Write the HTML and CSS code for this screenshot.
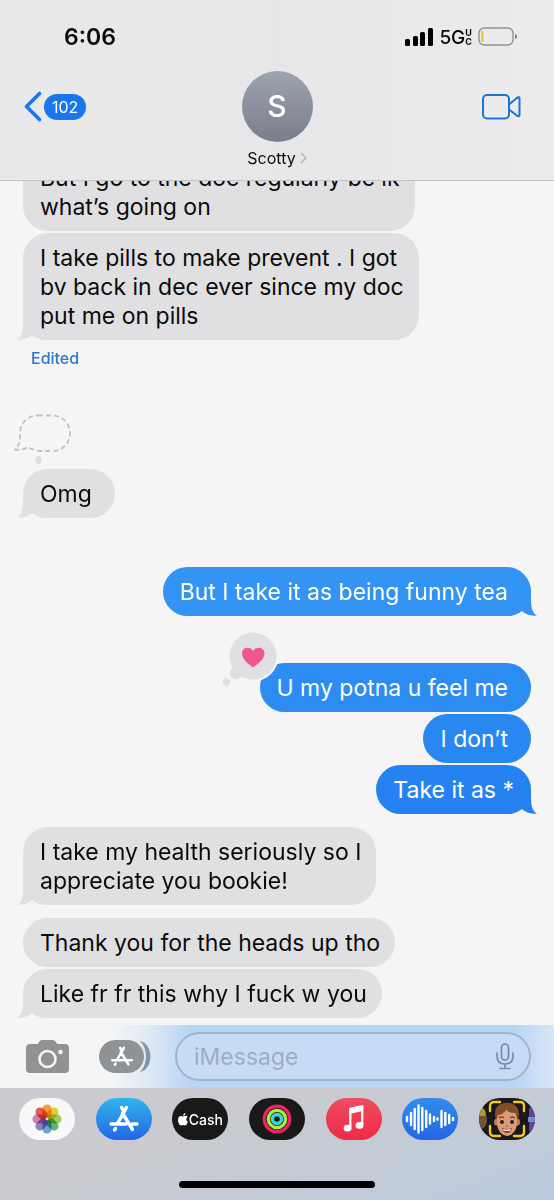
FILE: index.html
```html
<!DOCTYPE html>
<html lang="en">
<head>
    <meta charset="UTF-8">
    <meta name="viewport" content="width=device-width, initial-scale=1.0">
    <title>Messages - Scotty</title>
    <link rel="stylesheet" href="styles.css">
</head>
<body>
    <!-- shared shapes -->
    <svg class="defs" aria-hidden="true">
        <symbol id="tail" viewBox="0 0 30 25">
            <path d="M6 0V8C6 16 5 22 0 24.500C6 25.500 12 23 15 20C20 24 25 25 30 25V0Z"/>
        </symbol>
        <symbol id="appstore" viewBox="0 0 30 28">
            <g fill="none" stroke="#fff" stroke-width="3.400" stroke-linecap="round">
                <path d="M12.500 2.500L14.500 6M17.500 2.500L8.500 18.500M13.500 8L23.500 24.500M2 19H17M23 19H28M6.500 23.500L5.500 25"/>
            </g>
        </symbol>
    </svg>

    <header>
        <div class="status">
            <span class="time">6:06</span>
            <div class="status-right">
                <svg width="28" height="18" viewBox="0 0 28 18">
                    <rect x="0" y="11" width="5" height="7" rx="1.500"/>
                    <rect x="8" y="8" width="5" height="10" rx="1.500"/>
                    <rect x="15" y="4" width="5" height="14" rx="1.500"/>
                    <rect x="23" y="0" width="5" height="18" rx="1.500"/>
                </svg>
                <span class="network">5G<span class="uc"><span>U</span><span>C</span></span></span>
                <svg width="40" height="20" viewBox="0 0 40 20">
                    <rect x="1" y="1" width="34" height="17" rx="5" fill="none" stroke="#929295" stroke-width="1.400"/>
                    <rect x="3" y="4" width="2.500" height="11" rx="1" fill="#f5c443"/>
                    <path d="M37 7Q39 7.500 39 9.500Q39 11.500 37 12Z" fill="#77777a"/>
                </svg>
            </div>
        </div>
        <div class="topbar">
            <a href="#" class="back">
                <svg width="18" height="31" viewBox="0 0 18 31"><path d="M15.500 2.500L2.500 15.500L15.500 28.500" fill="none" stroke="#1976ef" stroke-width="3.600" stroke-linecap="round" stroke-linejoin="round"/></svg>
                <span class="count">102</span>
            </a>
            <a href="#" class="contact">
                <span class="avatar">S</span>
                <span class="name">Scotty
                    <svg width="7" height="12" viewBox="0 0 7 12"><path d="M1 1L6 6L1 11" fill="none" stroke="#b5b5b8" stroke-width="1.500"/></svg>
                </span>
            </a>
            <button type="button" class="video" aria-label="FaceTime">
                <svg width="39" height="26" viewBox="0 0 39 26" fill="none" stroke="#1c74d8" stroke-width="2" stroke-linejoin="round">
                    <rect x="1" y="1" width="26" height="23.500" rx="4"/>
                    <path d="M27 10.500L35.500 3.500Q37.500 2.500 37.500 4.500V21Q37.500 23 35.500 22L27 15.500"/>
                </svg>
            </button>
        </div>
    </header>

    <main>
        <div class="bubble in">But I go to the doc regularly bc ik<br>what’s going on</div>
        <div class="bubble in">I take pills to make prevent . I got<br>bv back in dec ever since my doc<br>put me on pills
            <svg class="tail"><use href="#tail"/></svg>
        </div>
        <a href="#" class="edited">Edited</a>

        <svg class="empty" width="58" height="50" viewBox="0 0 58 50">
            <path d="M24 1.500H38C49 1.500 56 10 56 19C56 29 49 37 38 37H26C21 36.500 17 35 14 33Q8 37 1 35.500C5 32 6 28 6 22V19C6 9 14 1.500 24 1.500Z" fill="none" stroke="#c3c3c5" stroke-width="1.800" stroke-dasharray="5 3"/>
            <ellipse cx="24.500" cy="46" rx="3" ry="4" fill="#dddddf"/>
        </svg>
        <div class="bubble in short">Omg
            <svg class="tail"><use href="#tail"/></svg>
        </div>

        <div class="bubble out shade-1 turn">But I take it as being funny tea
            <svg class="tail"><use href="#tail"/></svg>
        </div>
        <div class="bubble out shade-2 far">U my potna u feel me
            <svg class="reaction" width="58" height="58" viewBox="0 0 58 58">
                <circle cx="32" cy="25" r="25.500" fill="#f5f5f5"/>
                <circle cx="32" cy="25" r="23.500" fill="#e0e0e2"/>
                <circle cx="15" cy="42" r="6.500" fill="#e0e0e2"/>
                <circle cx="5.500" cy="51" r="3.700" fill="#e0e0e2"/>
                <path d="M32 36.500C27 33 21 28 21 22.500C21 16 29 15 32 20C35 15 43.500 16 43.500 22.500C43.500 28 37 33 32 36.500Z" fill="#ee5890"/>
            </svg>
        </div>
        <div class="bubble out shade-3">I don’t</div>
        <div class="bubble out shade-4">Take it as *
            <svg class="tail"><use href="#tail"/></svg>
        </div>

        <div class="bubble in near">I take my health seriously so I<br>appreciate you bookie!
            <svg class="tail"><use href="#tail"/></svg>
        </div>
        <div class="bubble in near">Thank you for the heads up tho</div>
        <div class="bubble in">Like fr fr this why I fuck w you
            <svg class="tail"><use href="#tail"/></svg>
        </div>
    </main>

    <form class="compose">
        <button type="button" aria-label="Camera">
            <svg width="43" height="34" viewBox="0 0 43 34">
                <path d="M4 4H11C13 4 13 0 16 0H27C30 0 30 4 32 4H39Q43 4 43 8V29Q43 33 39 33H4Q0 33 0 29V8Q0 4 4 4Z" fill="#929292"/>
                <circle cx="21.500" cy="19" r="8" fill="none" stroke="#f5f5f5" stroke-width="2.600"/>
                <circle cx="34.500" cy="12" r="2.300" fill="#f5f5f5"/>
            </svg>
        </button>
        <button type="button" aria-label="Apps">
            <svg width="52" height="34" viewBox="0 0 52 34">
                <rect width="45" height="33" rx="16.500" fill="#909396"/>
                <path d="M41 1C55 4 55 29 41 32C49 24 49 9 41 1Z" fill="#8195ab"/>
                <use href="#appstore" x="11" y="6" width="24" height="21"/>
            </svg>
        </button>
        <div class="field">
            <input type="text" placeholder="iMessage" aria-label="iMessage">
            <button type="button" aria-label="Dictate">
                <svg width="18" height="27" viewBox="0 0 18 27" fill="none" stroke="#728ba9" stroke-width="1.700" stroke-linecap="round">
                    <rect x="5.500" y="1" width="7" height="16" rx="3.500"/>
                    <path d="M1 10V13C1 18 4 21 9 21C14 21 17 18 17 13V10M9 21V25.500M4 25.500H14"/>
                </svg>
            </button>
        </div>
    </form>

    <footer>
        <nav class="apps">
            <button type="button" class="app photos" aria-label="Photos">
                <svg width="30" height="30" viewBox="-15 -15 30 30">
                    <g class="petals">
                        <rect x="-4.500" y="-14.500" width="9" height="13.500" rx="4.500" fill="#f69722"/>
                        <rect x="-4.500" y="-14.500" width="9" height="13.500" rx="4.500" fill="#e9cf22" transform="rotate(45)"/>
                        <rect x="-4.500" y="-14.500" width="9" height="13.500" rx="4.500" fill="#a1cc4a" transform="rotate(90)"/>
                        <rect x="-4.500" y="-14.500" width="9" height="13.500" rx="4.500" fill="#55ae74" transform="rotate(135)"/>
                        <rect x="-4.500" y="-14.500" width="9" height="13.500" rx="4.500" fill="#609fd4" transform="rotate(180)"/>
                        <rect x="-4.500" y="-14.500" width="9" height="13.500" rx="4.500" fill="#8a77b9" transform="rotate(225)"/>
                        <rect x="-4.500" y="-14.500" width="9" height="13.500" rx="4.500" fill="#cc79ad" transform="rotate(270)"/>
                        <rect x="-4.500" y="-14.500" width="9" height="13.500" rx="4.500" fill="#e94e3e" transform="rotate(315)"/>
                    </g>
                </svg>
            </button>
            <button type="button" class="app store" aria-label="App Store">
                <svg width="30" height="28"><use href="#appstore"/></svg>
            </button>
            <button type="button" class="app cash">
                <svg width="10" height="13" viewBox="0 0 10 13" fill="#fff">
                    <path d="M5 3.500C6 3.500 6.500 2.800 7.500 2.800C8.500 2.800 9.300 3.300 9.700 4C7.700 5 8 8 10 8.800C9.500 10.500 8.300 12.500 7.200 12.500C6.400 12.500 6 12 5.200 12C4.400 12 4 12.500 3.200 12.500C1.500 12.500 0 9.500 0 7C0 4.300 1.600 2.900 3 2.900C3.900 2.900 4.500 3.500 5 3.500Z"/>
                    <path d="M5 2.800C5 1.300 6 .2 7.400 0C7.500 1.600 6.400 2.800 5 2.800Z"/>
                </svg>
                Cash
            </button>
            <button type="button" class="app dark" aria-label="Fitness">
                <svg width="30" height="30" viewBox="0 0 30 30" fill="none" stroke-width="3.400">
                    <circle cx="15" cy="15" r="12.700" stroke="#ec2463"/>
                    <circle cx="15" cy="15" r="8.600" stroke="#a9f03a"/>
                    <circle cx="15" cy="15" r="4.500" stroke="#3bd9d4"/>
                </svg>
            </button>
            <button type="button" class="app music" aria-label="Music">
                <svg width="22" height="28" viewBox="0 0 24 30">
                    <path d="M8 24V4L21 1V21" fill="none" stroke="#fff" stroke-width="2.400" stroke-linejoin="round"/>
                    <path d="M7 3.500L22 0V6L7 9.500Z" fill="#fff"/>
                    <ellipse cx="5" cy="25" rx="4.300" ry="3.600" fill="#fff"/>
                    <ellipse cx="18" cy="22" rx="4.300" ry="3.600" fill="#fff"/>
                </svg>
            </button>
            <button type="button" class="app audio" aria-label="Audio messages">
                <svg width="50" height="30" viewBox="0 0 50 30" stroke="#fff" stroke-width="2.400" stroke-linecap="round">
                    <path d="M2 13V17M6 9V21M9.700 5V25M13.500 1.500V28.500M17.300 4V26M21.200 7V23M25 10.500V19.500M29 13V17M32.500 14.500V15.500M36.500 7V23M40.300 9V21M44.200 11V19M48 14V16"/>
                </svg>
            </button>
            <button type="button" class="app dark" aria-label="Memoji">
                <svg width="56" height="42" viewBox="0 0 56 42">
                    <ellipse cx="2" cy="22" rx="6" ry="9" fill="#70543c"/>
                    <path d="M0 9Q7 9 7 18H0Z" fill="#b29a31"/>
                    <rect x="50" y="9" width="8" height="26" rx="3" fill="#5a4a92"/>
                    <path d="M49 19H56V24H49Z" fill="#748ed0"/>
                    <path d="M11 13V8Q11 4 15 4H21M35 4H41Q45 4 45 8V13M45 28V34Q45 38 41 38H35M21 38H15Q11 38 11 34V28" fill="none" stroke="#f3c927" stroke-width="2.400" stroke-linecap="round"/>
                    <ellipse cx="17.500" cy="24" rx="2.500" ry="3.500" fill="#bf7a57"/>
                    <ellipse cx="38.500" cy="24" rx="2.500" ry="3.500" fill="#bf7a57"/>
                    <path d="M18 17Q18 10 28 10Q38 10 38 17V27Q36 37 28 38Q20 37 18 27Z" fill="#dc9b74"/>
                    <path d="M17 22C14 12 18 5 27 5C37 4 42 11 39 22Q37 19 36.500 15Q30 15 27 12Q24 17 19 17Z" fill="#834c2a"/>
                    <path d="M20 20Q23 18 25 20M31 20Q33 18 36 20" fill="none" stroke="#70452c" stroke-width="1.300"/>
                    <circle cx="23" cy="24" r="2" fill="#2b211d"/>
                    <circle cx="33" cy="24" r="2" fill="#2b211d"/>
                    <path d="M27 28Q28 29 29 28" fill="none" stroke="#b96a4c" stroke-width="1.200"/>
                    <path d="M23 30Q28 32 33 30Q32 35 28 35Q24 35 23 30Z" fill="#8e3830"/>
                    <path d="M24 31Q28 32.500 32 31L31.500 32.500Q28 33.500 24.500 32.500Z" fill="#fff"/>
                </svg>
            </button>
        </nav>
        <div class="home-bar"></div>
    </footer>
</body>
</html>
```
FILE: styles.css
```css
* {
    box-sizing: border-box;
}
body {
    margin: 0;
    height: 100vh;
    display: flex;
    flex-direction: column;
    font-family: Inter, Roboto, sans-serif;
    font-size: 23px;
    line-height: 29px;
    color: #0b0b0c;
    background-color: #f5f5f5;
}
svg {
    display: block;
    flex: none;
}
a {
    color: inherit;
    text-decoration: none;
}
button {
    padding: 0;
    border: none;
    background: none;
    font-family: inherit;
    cursor: pointer;
}
.defs {
    position: absolute;
    width: 0;
    height: 0;
}

/* Header */
header {
    flex: none;
    padding: 22px 33px 12px 24px;
    background: linear-gradient(90deg, #e9e9ea, #e7e7e9 50%, #ececed);
    border-bottom: 1px solid #c4c4c6;
}
.status {
    display: flex;
    justify-content: space-between;
    align-items: center;
    height: 30px;
    padding: 0 3px 0 40px;
}
.time {
    font-size: 23px;
    font-weight: 600;
}
.status-right {
    display: flex;
    align-items: center;
    gap: 6px;
}
.network {
    display: flex;
    align-items: center;
    font-size: 19px;
    font-weight: 500;
}
.uc {
    display: flex;
    flex-direction: column;
    font-size: 9px;
    font-weight: 700;
    line-height: 9px;
}
.topbar {
    display: grid;
    grid-template-columns: 1fr auto 1fr;
    align-items: start;
    padding-top: 19px;
}
.back {
    display: flex;
    align-items: center;
    gap: 2px;
    height: 71px;
}
.count {
    padding: 0 8px;
    border-radius: 13px;
    background-color: #1976ef;
    color: #fff;
    font-size: 16px;
    line-height: 26px;
}
.contact {
    display: flex;
    flex-direction: column;
    align-items: center;
    gap: 6px;
    margin-left: 9px;
}
.avatar {
    width: 71px;
    border-radius: 50%;
    background: linear-gradient(#9da3b1, #7b7e89);
    color: #fff;
    font-size: 30px;
    font-weight: 500;
    line-height: 71px;
    text-align: center;
}
.name {
    display: flex;
    align-items: center;
    gap: 4px;
    font-size: 16px;
    line-height: 20px;
}
.video {
    display: flex;
    align-items: center;
    justify-self: end;
    height: 71px;
}

/* Messages */
main {
    flex: 1;
    min-height: 0;
    display: flex;
    flex-direction: column;
    align-items: flex-start;
    justify-content: flex-end;
    gap: 2px;
    overflow: hidden;
    padding: 0 23px 7px;
}
.bubble {
    flex: none;
    position: relative;
    isolation: isolate;
    max-width: 80%;
    padding: 11px 15px 9px 17px;
    border-radius: 25px;
}
.in {
    background-color: #e0e0e2;
    fill: #e0e0e2;
}
.out {
    align-self: flex-end;
    padding-right: 23px;
    color: #fff;
}
.short {
    padding-right: 23px;
}
.shade-1 {
    background-color: #3394f3;
    fill: #3394f3;
}
.shade-2 {
    background-color: #2d8cf2;
}
.shade-3 {
    background-color: #2987f1;
}
.shade-4 {
    padding-right: 17px;
    background-color: #2682f0;
    fill: #2682f0;
}
.near {
    margin-top: 11px;
}
.far {
    margin-top: 45px;
}
.turn {
    margin-top: 47px;
}
/* sits over the bubble background but under its text */
.tail {
    position: absolute;
    z-index: -1;
    left: -6px;
    bottom: 0;
    width: 30px;
    height: 25px;
}
.out .tail {
    left: auto;
    right: -6px;
    transform: scaleX(-1);
}
.reaction {
    position: absolute;
    left: -39px;
    top: -32px;
}
.edited {
    margin: 6px 8px 44px;
    color: #2b78cc;
    font-size: 16px;
    font-weight: 500;
    line-height: 20px;
}
.empty {
    margin: 0 0 3px -9px;
}

/* Compose row */
.compose {
    flex: none;
    display: flex;
    align-items: center;
    gap: 30px;
    padding: 7px 23px 7px 26px;
    background: linear-gradient(90deg, #f5f5f5 20%, #dfe9f5 27%, #b9d5f6 34%, #b9d5f6 93%, #d8e6f6);
}
.field {
    flex: 1;
    display: flex;
    align-items: center;
    min-width: 0;
    height: 49px;
    margin-left: -6px;
    padding: 0 15px 0 17px;
    border: 2px solid #a3b4ca;
    border-radius: 25px;
    background-color: #c6dcf6;
}
.field input {
    flex: 1;
    min-width: 0;
    padding: 0;
    border: none;
    outline: none;
    background: none;
    font-family: inherit;
    font-size: 23px;
}
.field input::placeholder {
    color: #9bacc3;
}

/* App strip */
footer {
    flex: none;
    padding: 10px 19px 12px;
    background: linear-gradient(160deg, #c9cbd0 40%, #bccbe0);
}
.apps {
    display: flex;
    justify-content: space-between;
}
.app {
    display: flex;
    align-items: center;
    justify-content: center;
    width: 56px;
    height: 42px;
    border-radius: 21px;
    overflow: hidden;
}
.photos {
    background-color: #f8f8f8;
}
.petals rect {
    mix-blend-mode: multiply;
    opacity: .9;
}
.store {
    background: linear-gradient(#30b5ec, #2465e6);
}
.cash {
    gap: 1px;
    background-color: #19191a;
    color: #fff;
    font-size: 14px;
    font-weight: 500;
}
.dark {
    background-color: #19191a;
}
.music {
    background: linear-gradient(#ef4d63, #ee2b45);
}
.audio {
    background: linear-gradient(#328cef, #2367e2);
}
.home-bar {
    width: 38%;
    height: 7px;
    margin: 41px auto 0;
    border-radius: 4px;
    background-color: #000;
}
```
